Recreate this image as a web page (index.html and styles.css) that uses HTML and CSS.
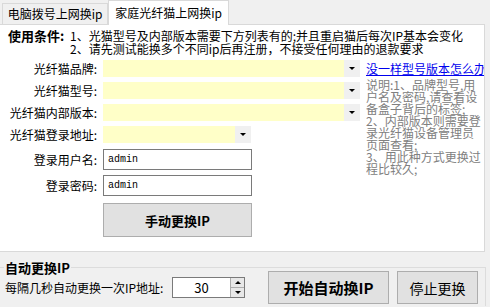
FILE: index.html
```html
<!DOCTYPE html>
<html lang="zh-CN">
<head>
    <meta charset="UTF-8">
    <title>家庭光纤猫上网换ip</title>
    <link rel="stylesheet" href="styles.css">
</head>
<body>
    <div class="tabs">
        <div class="tab tab-dial">电脑拨号上网换ip</div>
        <div class="tab tab-fiber active">家庭光纤猫上网换ip</div>
    </div>

    <div class="panel">
        <div class="terms">
            <b class="terms-title">使用条件:</b>
            <div class="terms-list">
                <div>1、光猫型号及内部版本需要下方列表有的;并且重启猫后每次IP基本会变化</div>
                <div>2、请先测试能换多个不同ip后再注册，不接受任何理由的退款要求</div>
            </div>
        </div>

        <div class="main">
            <div class="form">
                <div class="row">
                    <span class="label">光纤猫品牌:</span>
                    <div class="combo"><span class="combo-value"></span><span class="combo-arrow"></span></div>
                </div>
                <div class="row">
                    <span class="label">光纤猫型号:</span>
                    <div class="combo"><span class="combo-value"></span><span class="combo-arrow"></span></div>
                </div>
                <div class="row">
                    <span class="label">光纤猫内部版本:</span>
                    <div class="combo"><span class="combo-value"></span><span class="combo-arrow"></span></div>
                </div>
                <div class="row">
                    <span class="label">光纤猫登录地址:</span>
                    <div class="combo short"><span class="combo-value"></span><span class="combo-arrow"></span></div>
                </div>
                <div class="row row-text row-user">
                    <span class="label">登录用户名:</span>
                    <div class="textbox">admin</div>
                </div>
                <div class="row row-text row-pass">
                    <span class="label">登录密码:</span>
                    <div class="textbox">admin</div>
                </div>
                <div class="row row-btn">
                    <span class="label"></span>
                    <button class="btn btn-manual">手动更换IP</button>
                </div>
            </div>

            <div class="help">
                <a class="help-link" href="#">没一样型号版本怎么办</a>
                <div class="help-text">
                    <div>说明:1、品牌型号,用</div>
                    <div>户名及密码,请查看设</div>
                    <div>备盒子背后的标签;</div>
                    <div>2、内部版本则需要登</div>
                    <div>录光纤猫设备管理员</div>
                    <div>页面查看;</div>
                    <div>3、用此种方式更换过</div>
                    <div>程比较久;</div>
                </div>
            </div>
        </div>
    </div>

    <div class="auto">
        <b class="auto-title">自动更换IP</b>
        <div class="auto-row">
            <span class="auto-label">每隔几秒自动更换一次IP地址:</span>
            <div class="spin">
                <span class="spin-value">30</span>
                <span class="spin-buttons">
                    <span class="spin-up"></span>
                    <span class="spin-down"></span>
                </span>
            </div>
            <button class="btn btn-start">开始自动换IP</button>
            <button class="btn btn-stop">停止更换</button>
        </div>
    </div>
</body>
</html>
```

FILE: styles.css
```css
* {
    box-sizing: border-box;
}
body {
    margin: 0;
    width: 490px;
    height: 307px;
    overflow: hidden;
    background: #f0f0f0;
    color: #000;
    font-family: "Noto Sans CJK SC", "Noto Sans", sans-serif;
    font-size: 12px;
}

/* tabs */
.tabs {
    display: flex;
    align-items: flex-end;
    height: 24px;
    padding-left: 2px;
}
.tab {
    height: 21px;
    line-height: 20px;
    border: 1px solid #d9d9d9;
    border-bottom: none;
    font-size: 12px;
    text-align: center;
    background: #f0f0f0;
}
.tab-dial {
    width: 106px;
}
.tab-fiber {
    width: 121px;
}
.tab.active {
    height: 25px;
    line-height: 23px;
    margin-bottom: -1px;
    background: #fff;
    position: relative;
    z-index: 1;
}

/* white page */
.panel {
    width: 485px;
    height: 228px;
    background: #fff;
    border: 1px solid #d9d9d9;
    border-left: none;
}
.terms {
    display: flex;
    padding: 4px 0 0 8px;
    line-height: 13px;
}
.terms-title {
    width: 62px;
    font-size: 13px;
}
.terms-list {
    font-size: 12px;
    white-space: nowrap;
}

.main {
    display: flex;
    margin-top: 5px;
}
.form {
    width: 366px;
}
.row {
    display: flex;
    align-items: center;
    height: 17px;
    margin-bottom: 5px;
}
.label {
    width: 103px;
    padding-right: 6px;
    text-align: right;
    white-space: nowrap;
    font-size: 12px;
}
.combo {
    display: flex;
    height: 17px;
}
.combo-value {
    width: 241px;
    background: #ffffc8;
}
.combo.short .combo-value {
    width: 132px;
}
.combo-arrow {
    width: 16px;
    background: #f0f0f0;
    display: flex;
    align-items: center;
    justify-content: center;
}
.combo-arrow::before {
    content: "";
    border-left: 3px solid transparent;
    border-right: 3px solid transparent;
    border-top: 3px solid #000;
}

.row-text {
    height: 21px;
}
.row-user {
    margin-top: 6px;
    margin-bottom: 5px;
}
.row-pass {
    margin-bottom: 7px;
}
.textbox {
    width: 149px;
    height: 21px;
    border: 1px solid #7a7a7a;
    background: #fff;
    padding-left: 4px;
    font-family: "Liberation Mono", monospace;
    font-size: 10px;
    line-height: 19px;
}
.row-btn {
    height: 34px;
}

.btn {
    background: #e1e1e1;
    border: 1px solid #adadad;
    font-family: "Noto Sans CJK SC", "Noto Sans", sans-serif;
    color: #000;
    padding: 0;
}
.btn-manual {
    width: 149px;
    height: 34px;
    font-size: 13px;
    font-weight: bold;
}

/* right help column */
.help {
    width: 118px;
    overflow: hidden;
    white-space: nowrap;
}
.help-link {
    display: block;
    color: #0000ee;
    font-size: 12px;
    line-height: 17px;
    height: 19px;
}
.help-text {
    color: #808080;
    font-size: 12px;
    line-height: 12px;
}

/* bottom group */
.auto {
    position: relative;
    width: 486px;
    height: 39px;
    margin-top: 15px;
    border-top: 1px solid #dcdcdc;
    border-right: 1px solid #dcdcdc;
}
.auto-title {
    position: absolute;
    top: -8px;
    left: 4px;
    padding: 0 1px;
    background: #f0f0f0;
    font-size: 13px;
    line-height: 15px;
}
.auto-row {
    display: flex;
    align-items: center;
    height: 33px;
    margin-top: 3px;
    padding-left: 5px;
}
.auto-label {
    width: 167px;
    white-space: nowrap;
    font-size: 12px;
}
.spin {
    display: flex;
    width: 73px;
    height: 21px;
    border: 1px solid #7a7a7a;
    background: #fff;
}
.spin-value {
    flex: 1;
    text-align: center;
    font-size: 13px;
    line-height: 19px;
}
.spin-buttons {
    display: flex;
    flex-direction: column;
    width: 14px;
    border-left: 1px solid #adadad;
}
.spin-up, .spin-down {
    flex: 1;
    display: flex;
    align-items: center;
    justify-content: center;
    background: #e8e8e8;
}
.spin-up {
    border-bottom: 1px solid #adadad;
}
.spin-up::before {
    content: "";
    border-left: 3px solid transparent;
    border-right: 3px solid transparent;
    border-bottom: 3px solid #000;
}
.spin-down::before {
    content: "";
    border-left: 3px solid transparent;
    border-right: 3px solid transparent;
    border-top: 3px solid #000;
}
.btn-start {
    width: 121px;
    height: 33px;
    margin-left: 23px;
    font-size: 15px;
    font-weight: bold;
}
.btn-stop {
    width: 81px;
    height: 33px;
    margin-left: 8px;
    font-size: 14px;
}
```
